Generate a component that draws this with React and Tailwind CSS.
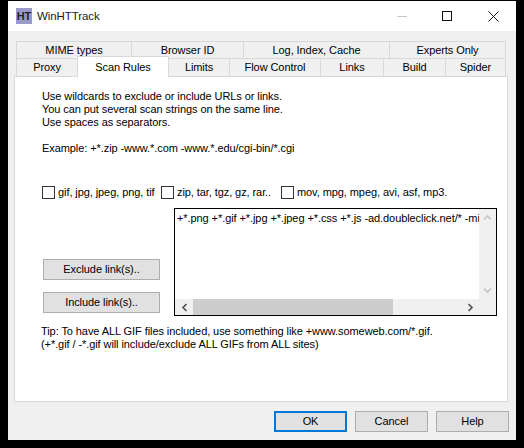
const FONT = "font-['Liberation_Sans',Arial,sans-serif]";

const TOP_TABS = [
  { label: "MIME types", w: "w-[116px]" },
  { label: "Browser ID", w: "w-[113px]" },
  { label: "Log, Index, Cache", w: "w-[147px]" },
  { label: "Experts Only", w: "w-[117px]" },
];

const BOTTOM_TABS = [
  { label: "Proxy", w: "w-[62px]" },
  { label: "Scan Rules", w: "w-[92px]", active: true },
  { label: "Limits", w: "w-[62px]" },
  { label: "Flow Control", w: "w-[92px]" },
  { label: "Links", w: "w-[64px]" },
  { label: "Build", w: "w-[63px]" },
  { label: "Spider", w: "w-[61px]" },
];

function Tab({ label, w, active }) {
  if (active) {
    return (
      <div className={`${w} h-[21px] -mt-[2px] -mb-px -mr-px z-10 bg-white border border-b-0 border-[#d9d9d9] flex items-center justify-center shrink-0`}>
        {label}
      </div>
    );
  }
  return (
    <div className={`${w} h-full bg-[#f0f0f0] border border-b-0 border-[#d9d9d9] -mr-px flex items-center justify-center shrink-0`}>
      {label}
    </div>
  );
}

function Check({ label, w }) {
  return (
    <div className={`${w} flex items-center gap-[3px] shrink-0`}>
      <span className="w-[13px] h-[13px] border border-[#333333] bg-white shrink-0" />
      <span className="whitespace-nowrap">{label}</span>
    </div>
  );
}

function Button({ children, className }) {
  return (
    <button className={`h-[21px] bg-[#e1e1e1] border border-[#adadad] flex items-center justify-center text-black ${className}`}>
      {children}
    </button>
  );
}

function Arrow({ d, className }) {
  return (
    <svg width="9" height="9" viewBox="0 0 9 9" fill="none" stroke="currentColor" strokeWidth="1.6" className={className}>
      <path d={d} />
    </svg>
  );
}

export default function App() {
  return (
    <div className={`w-[524px] h-[448px] bg-black overflow-hidden pt-px px-2 text-[11px] tracking-[-0.08px] leading-[13px] text-black ${FONT}`}>
      <div className="w-[508px] h-[439px] bg-[#f0f0f0] flex flex-col">
        {/* title bar */}
        <div className="h-[30px] bg-white flex items-center pl-2 shrink-0">
          <div className="w-4 h-4 bg-[#9999cc] flex items-center justify-center text-[11px] font-bold text-[#222222] shrink-0">HT</div>
          <span className="ml-[5px] text-[11.5px] text-[#222222]">WinHTTrack</span>
          <div className="ml-auto flex items-center pr-[17px]">
            <span className="w-[10px] h-px bg-[#c8c8c8]" />
            <span className="ml-[35px] w-[10px] h-[10px] border border-[#111111]" />
            <svg width="11" height="11" viewBox="0 0 11 11" stroke="#111111" strokeWidth="1" className="ml-[36px]">
              <path d="M0.5 0.5 L10.5 10.5 M10.5 0.5 L0.5 10.5" />
            </svg>
          </div>
        </div>

        {/* tabs */}
        <div className="pl-2 pt-[10px] flex flex-col shrink-0">
          <div className="h-[17px] flex">
            {TOP_TABS.map((t) => (
              <Tab key={t.label} {...t} />
            ))}
          </div>
          <div className="h-[18px] flex">
            {BOTTOM_TABS.map((t) => (
              <Tab key={t.label} {...t} />
            ))}
          </div>
        </div>

        {/* panel */}
        <div className="ml-[6px] w-[494px] h-[326px] bg-white border border-[#d9d9d9] pl-[27px] pt-[13px] shrink-0">
          <p>Use wildcards to exclude or include URLs or links.</p>
          <p>You can put several scan strings on the same line.</p>
          <p>Use spaces as separators.</p>
          <p className="mt-[13px]">Example: +*.zip -www.*.com -www.*.edu/cgi-bin/*.cgi</p>

          <div className="mt-[31px] flex items-center h-[13px]">
            <Check label="gif, jpg, jpeg, png, tif" w="w-[119px]" />
            <Check label="zip, tar, tgz, gz, rar.." w="w-[120px]" />
            <Check label="mov, mpg, mpeg, avi, asf, mp3." w="w-[190px]" />
          </div>

          <div className="mt-[9px] flex">
            <div className="w-[132px] pl-px pt-[51px] flex flex-col gap-3 shrink-0">
              <Button className="w-[117px]">Exclude link(s)..</Button>
              <Button className="w-[117px]">Include link(s)..</Button>
            </div>
            <div className="w-[323px] h-[108px] border border-black flex flex-col shrink-0">
              <div className="flex h-[90px]">
                <div className="flex-1 overflow-hidden whitespace-nowrap pl-[2px] pt-[3px]">
                  +*.png +*.gif +*.jpg +*.jpeg +*.css +*.js -ad.doubleclick.net/* -mime:application/foobar
                </div>
                <div className="w-[17px] bg-[#f0f0f0] flex flex-col items-center justify-between py-[4px] text-[#c4c4c4] shrink-0">
                  <Arrow d="M1 6.5 L4.5 3 L8 6.5" />
                  <Arrow d="M1 2.5 L4.5 6 L8 2.5" />
                </div>
              </div>
              <div className="h-[16px] bg-[#f0f0f0] flex items-center text-[#505050]">
                <div className="w-[18px] flex justify-center shrink-0">
                  <Arrow d="M6.5 1 L3 4.5 L6.5 8" />
                </div>
                <div className="w-[200px] h-full bg-[#cdcdcd]" />
                <div className="ml-auto mr-[21px]">
                  <Arrow d="M2.5 1 L6 4.5 L2.5 8" />
                </div>
              </div>
            </div>
          </div>

          <p className="mt-[9px] -ml-px">Tip: To have ALL GIF files included, use something like +www.someweb.com/*.gif.</p>
          <p className="-ml-px">(+*.gif / -*.gif will include/exclude ALL GIFs from ALL sites)</p>
        </div>

        {/* footer buttons */}
        <div className="pt-[9px] pl-[266px] flex gap-2">
          <Button className="w-[73px] !border-2 !border-[#0078d7]">OK</Button>
          <Button className="w-[73px]">Cancel</Button>
          <Button className="w-[73px]">Help</Button>
        </div>
      </div>
    </div>
  );
}
